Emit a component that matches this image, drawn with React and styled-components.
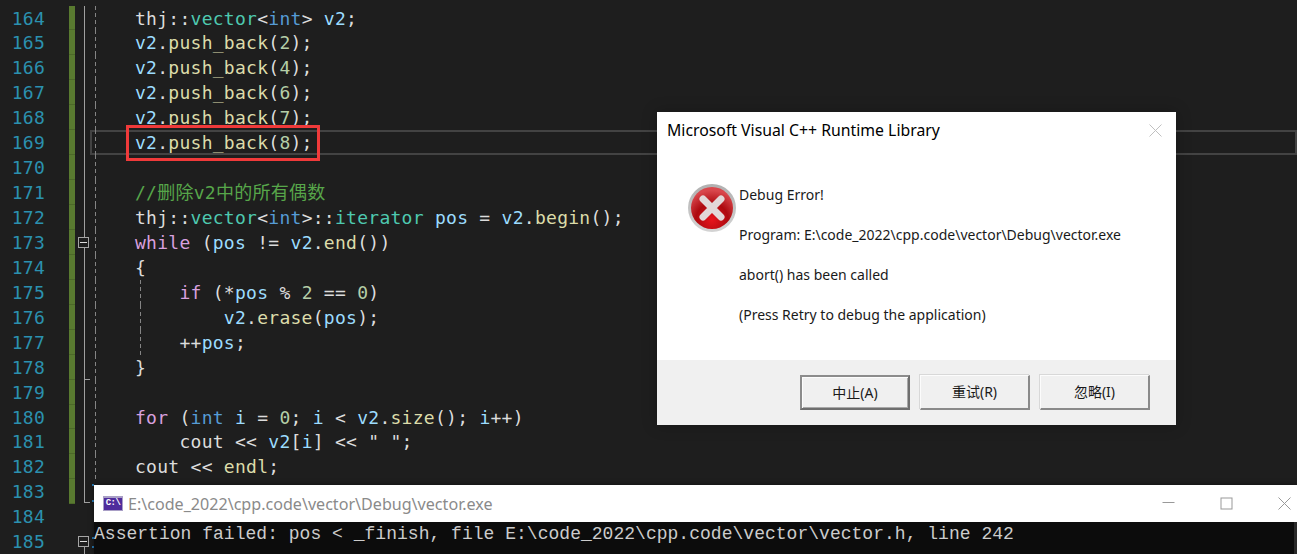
import React from "react";
import styled, { createGlobalStyle } from "styled-components";

const LINE_HEIGHT = 24.95;

// one token per colour: [kind, text]
const lines = [
    { n: 164, code: [["t", "thj::"], ["c", "vector"], ["t", "<"], ["k", "int"], ["t", "> "], ["v", "v2"], ["t", ";"]] },
    { n: 165, code: [["v", "v2"], ["t", "."], ["f", "push_back"], ["t", "("], ["n", "2"], ["t", ");"]] },
    { n: 166, code: [["v", "v2"], ["t", "."], ["f", "push_back"], ["t", "("], ["n", "4"], ["t", ");"]] },
    { n: 167, code: [["v", "v2"], ["t", "."], ["f", "push_back"], ["t", "("], ["n", "6"], ["t", ");"]] },
    { n: 168, code: [["v", "v2"], ["t", "."], ["f", "push_back"], ["t", "("], ["n", "7"], ["t", ");"]] },
    { n: 169, current: true, code: [["v", "v2"], ["t", "."], ["f", "push_back"], ["t", "("], ["n", "8"], ["t", ");"]] },
    { n: 170, code: [] },
    { n: 171, code: [["g", "//删除v2中的所有偶数"]] },
    { n: 172, code: [["t", "thj::"], ["c", "vector"], ["t", "<"], ["k", "int"], ["t", ">::"], ["c", "iterator"], ["t", " "], ["v", "pos"], ["t", " = "], ["v", "v2"], ["t", "."], ["f", "begin"], ["t", "();"]] },
    { n: 173, fold: "box", code: [["m", "while"], ["t", " ("], ["v", "pos"], ["t", " != "], ["v", "v2"], ["t", "."], ["f", "end"], ["t", "())"]] },
    { n: 174, code: [["t", "{"]] },
    { n: 175, guide: true, code: [["t", "    "], ["m", "if"], ["t", " (*"], ["v", "pos"], ["t", " % "], ["n", "2"], ["t", " == "], ["n", "0"], ["t", ")"]] },
    { n: 176, guide: true, code: [["t", "        "], ["v", "v2"], ["t", "."], ["f", "erase"], ["t", "("], ["v", "pos"], ["t", ");"]] },
    { n: 177, guide: true, code: [["t", "    ++"], ["v", "pos"], ["t", ";"]] },
    { n: 178, fold: "tick", code: [["t", "}"]] },
    { n: 179, code: [] },
    { n: 180, code: [["m", "for"], ["t", " ("], ["k", "int"], ["t", " "], ["v", "i"], ["t", " = "], ["n", "0"], ["t", "; "], ["v", "i"], ["t", " < "], ["v", "v2"], ["t", "."], ["f", "size"], ["t", "(); "], ["v", "i"], ["t", "++)"]] },
    { n: 181, code: [["t", "    cout << "], ["v", "v2"], ["t", "["], ["v", "i"], ["t", "] << "], ["t", "\" \""], ["t", ";"]] },
    { n: 182, code: [["t", "cout << "], ["f", "endl"], ["t", ";"]] },
    { n: 183, fold: "end", noIndent: true, marks: [5, 21], code: [] },
    { n: 184, fold: "none", plain: true, noIndent: true, code: [] },
    { n: 185, fold: "start", plain: true, noIndent: true, marks: [8, 17], code: [] },
];

const tokenColors = {
    t: "#dcdcdc",
    c: "#4ec9b0",
    k: "#569cd6",
    v: "#9cdcfe",
    f: "#dcdcaa",
    n: "#b5cea8",
    m: "#d8a0df",
    g: "#57a64a",
};

const GlobalStyle = createGlobalStyle`
    html, body {
        margin: 0;
        padding: 0;
        background: #1e1e1e;
        overflow: hidden;
    }
`;

const Page = styled.div`
    position: relative;
    width: 1297px;
    height: 554px;
    overflow: hidden;
    background: #1e1e1e;
`;

const Editor = styled.div`
    padding-top: 5.5px;
    font-family: "DejaVu Sans Mono", "Noto Sans CJK SC", monospace;
    font-size: 18px;
    letter-spacing: 0.27px;
`;

const Row = styled.div`
    display: flex;
    height: ${LINE_HEIGHT}px;
    line-height: ${LINE_HEIGHT + 2}px;
`;

const LineNumber = styled.div`
    width: 45px;
    flex: none;
    text-align: right;
    color: #2b91af;
`;

const ChangeBar = styled.div`
    width: 6px;
    flex: none;
    margin-left: 24px;
    box-sizing: border-box;
    background: ${(props) => (props.$on ? "#597a30" : "transparent")};
    border-bottom: 1px solid ${(props) => (props.$on ? "#4c6829" : "transparent")};
`;

const FoldMargin = styled.div`
    position: relative;
    width: 15px;
    flex: none;

    &::before {
        content: "";
        display: ${(props) => (props.$kind === "none" ? "none" : "block")};
        position: absolute;
        left: 8.5px;
        top: ${(props) => (props.$kind === "start" ? "50%" : "0")};
        width: 1.5px;
        height: ${(props) => (props.$kind === "end" ? "24px" : "100%")};
        background: #a0a0a0;
    }

    &::after {
        content: "";
        display: ${(props) => (props.$kind === "end" || props.$kind === "tick" ? "block" : "none")};
        position: absolute;
        left: 9px;
        bottom: ${(props) => (props.$kind === "end" ? "1px" : "0")};
        width: 6px;
        height: 1px;
        background: #a0a0a0;
    }
`;

const FoldBox = styled.div`
    position: absolute;
    z-index: 1;
    left: 3px;
    top: 7px;
    width: 9px;
    height: 9px;
    border: 1px solid #a5a5a5;
    background: #1e1e1e;

    &::after {
        content: "";
        position: absolute;
        left: 1px;
        right: 1px;
        top: 4px;
        height: 1px;
        background: #dcdcdc;
    }
`;

const CodeCell = styled.div`
    position: relative;
    flex: 1;
    padding-left: 45px;
    white-space: pre;
`;

const CurrentLine = styled.div`
    position: absolute;
    left: 0;
    right: 0;
    top: 0;
    height: 21px;
    border: 2px solid #434343;
`;

const Guide = styled.div`
    position: absolute;
    left: ${(props) => props.$left}px;
    top: 0;
    bottom: 0;
    width: 1px;
    background: repeating-linear-gradient(to bottom, #858585 0 4px, transparent 4px 7px);
`;

const BraceMark = styled.div`
    position: absolute;
    left: 2px;
    top: ${(props) => props.$top}px;
    width: 2px;
    height: 2px;
    background: #2a7db8;
`;

const Token = styled.span`
    position: relative;
    color: ${(props) => tokenColors[props.$kind]};
`;

const RedBox = styled.div`
    position: absolute;
    left: 126px;
    top: 125px;
    width: 194px;
    height: 36px;
    box-sizing: border-box;
    border: 3px solid #f03a3a;
`;

const Dialog = styled.div`
    position: absolute;
    left: 657px;
    top: 112px;
    width: 519px;
    height: 313px;
    display: flex;
    flex-direction: column;
    background: #fff;
    box-shadow: 0 0 14px rgba(0, 0, 0, 0.25);
    font-family: "Noto Sans", "Noto Sans CJK SC", sans-serif;
    color: #1a1a1a;
`;

const DialogTitle = styled.div`
    display: flex;
    justify-content: space-between;
    align-items: center;
    height: 36px;
    padding: 0 14px 0 10px;
    font-size: 15.8px;
    color: #000;
`;

const DialogBody = styled.div`
    flex: 1;
    display: flex;
    padding: 20px 0 0 30px;
`;

const ErrorIcon = styled.svg`
    width: 50px;
    height: 50px;
    margin-top: 15px;
    flex: none;
`;

const Messages = styled.div`
    display: flex;
    flex-direction: column;
    font-size: 14px;
    line-height: 40px;
    margin-left: 2px;
    margin-top: 7px;
`;

const DialogFooter = styled.div`
    display: flex;
    justify-content: flex-end;
    gap: 10px;
    height: 65px;
    padding: 15px 26px 0 0;
    box-sizing: border-box;
    background: #f0f0f0;
`;

const DialogButton = styled.div`
    width: 110px;
    height: 35px;
    box-sizing: border-box;
    display: flex;
    align-items: center;
    justify-content: center;
    padding-bottom: 2px;
    font-size: 14px;
    background: #f0f0f0;
    border-style: solid;
    border-width: ${(props) => (props.$primary ? "2px" : "1px 2px 2px 1px")};
    border-color: ${(props) => (props.$primary ? "#8c8c8c #6e6e6e #6e6e6e #8c8c8c" : "#fcfcfc #8a8a8a #8a8a8a #fcfcfc")};
    box-shadow: ${(props) => (props.$primary ? "inset 1px 1px 0 #fcfcfc, inset -1px -1px 0 #a8a8a8" : "-1px -1px 0 #d8d8d8")};
`;

const Console = styled.div`
    position: absolute;
    left: 94px;
    right: 0;
    top: 485px;
    height: 69px;
    display: flex;
    flex-direction: column;
    box-shadow: 0 0 5px rgba(0, 0, 0, 0.5);
`;

const ConsoleTitle = styled.div`
    height: 37px;
    flex: none;
    display: flex;
    align-items: center;
    background: #fff;
    padding-left: 9px;
    font-family: "Noto Sans", sans-serif;
    font-size: 16.1px;
    color: #8a8a8a;
`;

const ConsoleIcon = styled.div`
    width: 20px;
    height: 15px;
    flex: none;
    margin-right: 5px;
    box-sizing: border-box;
    border: 1px solid #a99fc6;
    border-top-width: 2px;
    background: #4f2c9c;
    color: #fff;
    font-family: "Liberation Mono", monospace;
    font-size: 9px;
    font-weight: bold;
    line-height: 11px;
    text-align: center;
    letter-spacing: -0.5px;
`;

const ConsoleTitleText = styled.span`
    flex: 1;
`;

const WindowButtons = styled.div`
    display: flex;
    align-items: center;
    gap: 45px;
    padding-right: 6px;
`;

const WindowIcon = styled.svg`
    width: 13px;
    height: 13px;
    display: block;
`;

const ConsoleBody = styled.div`
    flex: 1;
    background: #0c0c0c;
    border-right: 3px solid #2a2a2a;
    font-family: "Liberation Mono", monospace;
    font-size: 18px;
    letter-spacing: 0.02px;
    line-height: 24px;
    color: #cccccc;
    white-space: pre;
`;

const App = () => {
    return (
        <Page>
            <GlobalStyle />
            <Editor>
                {lines.map((line) => (
                    <Row key={line.n}>
                        <LineNumber>{line.n}</LineNumber>
                        <ChangeBar $on={!line.plain} />
                        <FoldMargin $kind={line.fold}>
                            {(line.fold === "box" || line.fold === "start") && <FoldBox />}
                        </FoldMargin>
                        <CodeCell>
                            {line.current && <CurrentLine />}
                            {!line.noIndent && <Guide $left={5} />}
                            {line.guide && <Guide $left={50} />}
                            {line.marks && line.marks.map((top) => <BraceMark key={top} $top={top} />)}
                            {line.code.map(([kind, text], i) => (
                                <Token key={i} $kind={kind}>
                                    {text}
                                </Token>
                            ))}
                        </CodeCell>
                    </Row>
                ))}
            </Editor>
            <RedBox />

            <Dialog>
                <DialogTitle>
                    <span>Microsoft Visual C++ Runtime Library</span>
                    <WindowIcon viewBox="0 0 13 13">
                        <path d="M0.5 0.5 L12.5 12.5 M12.5 0.5 L0.5 12.5" stroke="#c0c0c0" strokeWidth="1" fill="none" />
                    </WindowIcon>
                </DialogTitle>
                <DialogBody>
                    <ErrorIcon viewBox="0 0 50 50">
                        <defs>
                            <radialGradient id="errorFill" cx="50%" cy="78%" r="70%">
                                <stop offset="0%" stopColor="#e8141c" />
                                <stop offset="55%" stopColor="#ad0a0f" />
                                <stop offset="100%" stopColor="#d9474c" />
                            </radialGradient>
                            <linearGradient id="errorRing" x1="0" y1="0" x2="0" y2="1">
                                <stop offset="0%" stopColor="#b0b0b0" />
                                <stop offset="100%" stopColor="#d4d4d4" />
                            </linearGradient>
                        </defs>
                        <circle cx="25" cy="25" r="24" fill="url(#errorRing)" />
                        <circle cx="25" cy="25" r="21" fill="url(#errorFill)" />
                        <path d="M16 16 L34 34 M34 16 L16 34" stroke="#e2d8d8" strokeWidth="7" strokeLinecap="round" fill="none" />
                    </ErrorIcon>
                    <Messages>
                        <span>Debug Error!</span>
                        <span>Program: E:\code_2022\cpp.code\vector\Debug\vector.exe</span>
                        <span>abort() has been called</span>
                        <span>(Press Retry to debug the application)</span>
                    </Messages>
                </DialogBody>
                <DialogFooter>
                    <DialogButton $primary>中止(A)</DialogButton>
                    <DialogButton>重试(R)</DialogButton>
                    <DialogButton>忽略(I)</DialogButton>
                </DialogFooter>
            </Dialog>

            <Console>
                <ConsoleTitle>
                    <ConsoleIcon>C:\</ConsoleIcon>
                    <ConsoleTitleText>E:\code_2022\cpp.code\vector\Debug\vector.exe</ConsoleTitleText>
                    <WindowButtons>
                        <WindowIcon viewBox="0 0 13 13">
                            <path d="M0.5 5.5 H12.5" stroke="#999" strokeWidth="1" fill="none" />
                        </WindowIcon>
                        <WindowIcon viewBox="0 0 13 13">
                            <rect x="1" y="1" width="11" height="11" stroke="#999" strokeWidth="1" fill="none" />
                        </WindowIcon>
                        <WindowIcon viewBox="0 0 13 13">
                            <path d="M0.5 0.5 L12.5 12.5 M12.5 0.5 L0.5 12.5" stroke="#999" strokeWidth="1" fill="none" />
                        </WindowIcon>
                    </WindowButtons>
                </ConsoleTitle>
                <ConsoleBody>Assertion failed: pos &lt; _finish, file E:\code_2022\cpp.code\vector\vector.h, line 242</ConsoleBody>
            </Console>
        </Page>
    );
};

export default App;
